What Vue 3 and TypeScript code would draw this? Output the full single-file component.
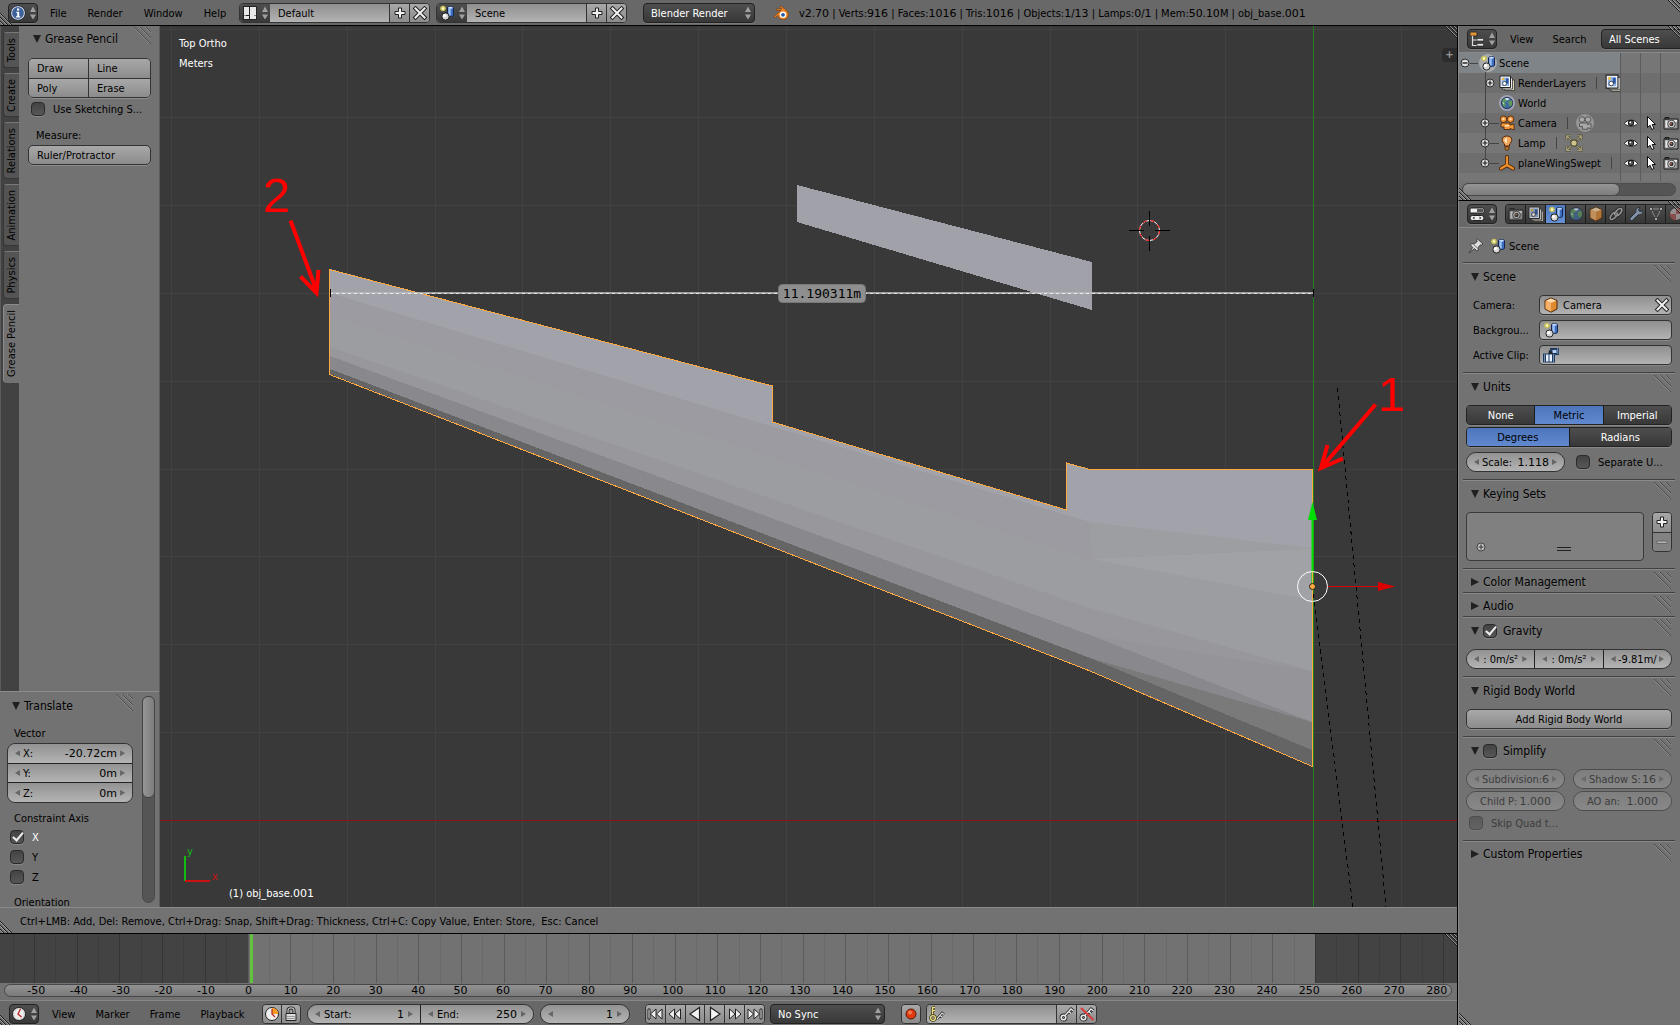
<script setup lang="ts">
import { ref } from 'vue'

interface Tab { label: string; size: number }
interface Row { name: string; icon: string; expand: boolean; data: string; toggles: boolean }

const menus: string[] = ['File', 'Render', 'Window', 'Help']
const stats = 'v2.70 | Verts:916 | Faces:1016 | Tris:1016 | Objects:1/13 | Lamps:0/1 | Mem:50.10M | obj_base.001'
const statParts: string[] = stats.split(/(\d+)/)
const tabs: Tab[] = [
  { label: 'Tools', size: 36 },
  { label: 'Create', size: 44 },
  { label: 'Relations', size: 57 },
  { label: 'Animation', size: 62 },
  { label: 'Physics', size: 48 },
  { label: 'Grease Pencil', size: 79 },
]
const vector = [
  { axis: 'X:', value: '-20.72cm' },
  { axis: 'Y:', value: '0m' },
  { axis: 'Z:', value: '0m' },
]
const axes = ref([
  { name: 'X', on: true },
  { name: 'Y', on: false },
  { name: 'Z', on: false },
])
const rows: Row[] = [
  { name: 'RenderLayers', icon: 'layers', expand: true, data: 'layers', toggles: false },
  { name: 'World', icon: 'worldhalo', expand: false, data: '', toggles: false },
  { name: 'Camera', icon: 'camera', expand: true, data: 'cameradata', toggles: true },
  { name: 'Lamp', icon: 'lamp', expand: true, data: 'lampdata', toggles: true },
  { name: 'planeWingSwept', icon: 'empty', expand: true, data: '', toggles: true },
]
const contexts: string[] = ['render', 'layers', 'scene', 'world', 'cube', 'link', 'wrench', 'mesh', 'material']
const gravity: string[] = [': 0m/s²', ': 0m/s²', '-9.81m/']
const transport: string[] = ['first', 'prev', 'back', 'play', 'next', 'last']

const gridX = Array.from({ length: 15 }, (_, i) => Math.round(171 + i * 87.85) + 0.5)
const gridY = Array.from({ length: 10 }, (_, i) => Math.round(29 + i * 87.9) + 0.5)

const frames = Array.from({ length: 34 }, (_, i) => -50 + i * 10)
const ticks = Array.from({ length: 69 }, (_, i) => -55 + i * 5)
const frameX = (f: number): number => Math.round(247.5 + f * 4.27) + 0.5
const gravityOn = ref(true)
</script>

<template>
  <svg class="defs" width="0" height="0" aria-hidden="true">
    <defs>
      <symbol id="i-ud" viewBox="0 0 8 16"><path d="M4 1.500L7 7H1zM4 14.500L7 9.500H1z" fill="#a0a0a0" /></symbol>
      <symbol id="i-info" viewBox="0 0 16 16">
        <circle cx="8" cy="8" r="6.500" fill="#3d6199" stroke="#d8dde6" stroke-width="1.200" /><circle cx="8" cy="8" r="7.400" fill="none" stroke="#1c2436" stroke-width=".7" />
        <path d="M6.200 6.700h3v4.600h1V12.400H6V11.300h1.200V7.800h-1zM7 3.600h2.200v2H7z" fill="#fff" />
      </symbol>
      <symbol id="i-screen" viewBox="0 0 16 16">
        <rect x="1" y="1" width="14" height="14" rx="1" fill="#222" />
        <path d="M2 2h5v8H2zM2 11h5v3H2zM8 2h6v8H8zM8 11h3v3H8zM12 11h2v3h-2z" fill="#e8e8e8" /><path d="M8 2h6v12H8z" fill="#e8e8e8" /><path d="M12 10.500h2M2 10.500h2" stroke="#888" />
      </symbol>
      <symbol id="i-plus" viewBox="0 0 16 16"><path d="M6.500 3h3v3.500H13v3H9.500V13h-3V9.500H3v-3h3.500z" fill="#f2f2f2" stroke="#222" /></symbol>
      <symbol id="i-minus" viewBox="0 0 16 16"><path d="M3 7h10v2.500H3z" fill="#b4b4b4" stroke="#5a5a5a" stroke-width=".8" /></symbol>
      <symbol id="i-x" viewBox="0 0 16 16"><path d="M3.500 3.500l9 9M12.500 3.500l-9 9" stroke="#222" stroke-width="4" stroke-linecap="square" /><path d="M3.500 3.500l9 9M12.500 3.500l-9 9" stroke="#f2f2f2" stroke-width="2" stroke-linecap="square" /></symbol>
      <symbol id="i-scene" viewBox="0 0 16 16">
        <circle cx="4" cy="3.500" r="2.800" fill="#c8c25a" /><circle cx="4" cy="3.500" r="1.200" fill="#ffffd0" />
        <path d="M8.500 3c0-2 6-2 6 0v7c0 2-6 2-6 0z" fill="#3c6cc0" stroke="#16264a" /><path d="M9.300 3.500h2.400v7H9.300z" fill="#9fc2f2" /><ellipse cx="11.500" cy="2.800" rx="2.400" ry="1" fill="#c6dcff" />
        <circle cx="6.500" cy="11.500" r="3.600" fill="#d6d6d6" stroke="#222" /><circle cx="5.500" cy="10.500" r="1.600" fill="#fff" />
      </symbol>
      <symbol id="i-blender" viewBox="0 0 16 16">
        <path d="M1 11.500L8 5.500H3.500V4H9L6.500 2 8 1l6 5c2.500 3 1.500 8-3.500 8.500C7 14.500 5 12.500 5 10.300L2.500 12.500z" fill="#f08020" stroke="#7a3c08" stroke-width=".6" />
        <circle cx="10" cy="9.800" r="3.300" fill="#fff" /><circle cx="10" cy="9.800" r="1.900" fill="#2a5a9c" />
      </symbol>
      <symbol id="i-outliner" viewBox="0 0 16 16">
        <path d="M1 1h7v4H1z" fill="#e0953a" stroke="#222" stroke-width=".8" /><path d="M3.500 5v9.500H8M3.500 9H8" fill="none" stroke="#ddd" stroke-width="1.200" /><path d="M8 7.500h6.500V10H8zM8 12.500h6.500V15H8z" fill="#e6e6e6" stroke="#222" stroke-width=".6" />
      </symbol>
      <symbol id="i-buttons" viewBox="0 0 16 16">
        <rect x="1" y="2" width="14" height="5" rx="1.500" fill="#eee" stroke="#222" /><path d="M8 3h6v3H8z" fill="#555" />
        <rect x="1" y="9.500" width="14" height="5" rx="2.500" fill="#eee" stroke="#222" /><path d="M5.500 10.500L3.500 12l2 1.500zM10.500 10.500l2 1.500-2 1.500z" fill="#333" />
      </symbol>
      <symbol id="i-render" viewBox="0 0 16 16">
        <path d="M1 4h14v10H1zM2 2.500h4V4H2z" fill="#9a9a9a" stroke="#1c1c1c" /><path d="M2.500 5.500h2v7h-2zM11 5h3v2h-3z" fill="#e8e8e8" />
        <circle cx="8.500" cy="9" r="3.700" fill="#f2f2f2" stroke="#222" stroke-width=".8" /><circle cx="8.500" cy="9" r="2.200" fill="#333" /><circle cx="8" cy="8.500" r=".9" fill="#c86a5a" />
      </symbol>
      <symbol id="i-layers" viewBox="0 0 16 16">
        <path d="M5.500 5h10v10.500h-10z" fill="#d8d2b8" stroke="#333" stroke-width=".8" /><path d="M3.500 3h10v11h-10z" fill="#eee" stroke="#333" stroke-width=".8" /><path d="M1 1h10.500v11.500H1z" fill="#fff" stroke="#222" />
        <path d="M2.500 2.500h7.500V11H2.500z" fill="#8fb4e8" /><path d="M7 3.500h2.500v5H7z" fill="#2c54a4" /><circle cx="5.500" cy="8.500" r="2" fill="#fff" stroke="#222" stroke-width=".7" /><circle cx="4" cy="4" r="1.300" fill="#f0c040" />
      </symbol>
      <symbol id="i-world" viewBox="0 0 16 16">
        <circle cx="8" cy="8" r="6.500" fill="#3f6ba0" stroke="#1d2f4a" /><path d="M3 4.500c2-2 4-2 5.500-1.500L7.500 6 5 7.500 6.500 10 5 12.500C3 11 1.700 8 3 4.500zM10 5.500l3.500-.5c1 2 .8 4.500-.7 6.500L10.500 11 9.500 8z" fill="#5f9a58" />
        <path d="M5.500 3c2-1 4-1 5.500.3L8 5zM3 7l2 1-1 1.500z" fill="#dfeaf5" />
      </symbol>
      <symbol id="i-worldhalo" viewBox="0 0 16 16"><circle cx="8" cy="8" r="8" fill="#a3a3b8" /><use href="#i-world" x="1" y="1" width="14" height="14" /></symbol>
      <symbol id="i-camera" viewBox="0 0 16 16">
        <g fill="#f0973c" stroke="#50290a" stroke-width=".9"><circle cx="4.500" cy="4.200" r="3.300" /><circle cx="11.500" cy="4.200" r="3.300" /><path d="M3 8h8v2l4-1v6l-4-1.500V14.500H5V12H2V9z" /></g><circle cx="4.500" cy="4.200" r="1.100" fill="#ffe2bf" /><circle cx="11.500" cy="4.200" r="1.100" fill="#ffe2bf" /><path d="M6 10h4v1.500H6z" fill="#ffe2bf" />
      </symbol>
      <symbol id="i-cameradata" viewBox="0 0 18 18">
        <circle cx="9" cy="9" r="9" fill="#969696" /><g fill="#a8a8a8" stroke="#505050" stroke-width=".9"><circle cx="6" cy="5.500" r="2.800" /><circle cx="12" cy="5.500" r="2.800" /><path d="M4.500 9h7v1.500l3.500-.8v5l-3.500-1v1.600H6.500V12.500h-3V10z" /></g>
      </symbol>
      <symbol id="i-lamp" viewBox="0 0 16 16">
        <path d="M8 1C1.800 1 2.500 7 5.500 9v2h5V9C13.500 7 14.200 1 8 1z" fill="#f3a65a" stroke="#50290a" /><path d="M8 3c-3 0-3 3-1.500 4.500L8 8z" fill="#ffe6c8" /><path d="M6 11.500h4V14l-1 1.300H7L6 14z" fill="#b0702c" stroke="#50290a" stroke-width=".8" />
      </symbol>
      <symbol id="i-lampdata" viewBox="0 0 16 16">
        <path d="M1.500 5V1.500H5M11 1.500h3.500V5M14.500 11v3.500H11M5 14.500H1.500V11M2 2l3.500 3.500M14 2l-3.500 3.500M14 14l-3.500-3.500M2 14l3.500-3.500" fill="none" stroke="#4c4936" stroke-width="2" /><path d="M1.500 5V1.500H5M11 1.500h3.500V5M14.500 11v3.500H11M5 14.500H1.500V11M2 2l3.500 3.500M14 2l-3.500 3.500M14 14l-3.500-3.500M2 14l3.500-3.500" fill="none" stroke="#a8a078" /><circle cx="8" cy="8" r="2.800" fill="#cfc488" stroke="#4f4b38" />
      </symbol>
      <symbol id="i-empty" viewBox="0 0 16 16"><path d="M8 2v8M8 10l-6 3.500M8 10l6 3.500" stroke="#50290a" stroke-width="4" stroke-linecap="round" /><path d="M8 2v8M8 10l-6 3.500M8 10l6 3.500" stroke="#f0902c" stroke-width="2.200" stroke-linecap="round" /></symbol>
      <symbol id="i-eye" viewBox="0 0 16 16"><path d="M1.500 8.500C4 4 12 4 14.500 8.500 12 12 4 12 1.500 8.500z" fill="#fff" stroke="#222" /><circle cx="8" cy="8" r="2.700" fill="#555" stroke="#111" /><circle cx="7.300" cy="7.300" r=".9" fill="#fff" /></symbol>
      <symbol id="i-cursor" viewBox="0 0 16 16"><path d="M4.500 1.500v11l2.600-2.200 1.700 4.200 2.200-1-1.800-4h3.300z" fill="#fff" stroke="#111" /></symbol>
      <symbol id="i-cube" viewBox="0 0 16 16"><path d="M8 1l6 2.500v8.500L8 15.200 2 12V3.500z" fill="#e08a30" stroke="#4a2708" /><path d="M8 6v8.500L2.600 11.700V4.200z" fill="#f6b168" /><path d="M8 1.600l5.200 2.200L8 5.800 2.800 3.800z" fill="#ffdcae" /></symbol>
      <symbol id="i-link" viewBox="0 0 16 16"><g fill="none" stroke-linecap="round"><path d="M7 9c-1.500-1.500 3-6.500 5-6.500s3.500 2.500-2 7M9 7c1.500 1.500-3 6.500-5 6.500s-3.500-2.500 2-7" stroke="#222" stroke-width="3.400" /><path d="M7 9c-1.500-1.500 3-6.500 5-6.500s3.500 2.500-2 7M9 7c1.500 1.500-3 6.500-5 6.500s-3.500-2.500 2-7" stroke="#b8b8b8" stroke-width="1.600" /></g></symbol>
      <symbol id="i-wrench" viewBox="0 0 16 16"><path d="M2 12l6-6c-.8-2.500 1-5 4-4.500L10.500 4l1.500 1.800 2.600-1.300c.6 3-1.800 4.800-4 4L4.300 14.500C3 15.500 1 13.500 2 12z" fill="#9bb3d4" stroke="#20262f" /></symbol>
      <symbol id="i-mesh" viewBox="0 0 16 16"><path d="M3 3h10L8 13z" fill="none" stroke="#aaa" /><path d="M1.500 1.500h3v3h-3zM11.500 1.500h3v3h-3zM6.500 11.500h3v3h-3z" fill="#d8d8d8" stroke="#222" stroke-width=".8" /></symbol>
      <symbol id="i-material" viewBox="0 0 16 16"><circle cx="8" cy="8" r="6.500" fill="#b8b0b0" stroke="#222" /><path d="M8 1.500A6.500 6.500 0 0 1 14.500 8H8zM8 8v6.500A6.500 6.500 0 0 1 1.500 8z" fill="#a85450" /></symbol>
      <symbol id="i-pin" viewBox="0 0 16 16"><path d="M9.500 1l5.500 5-1.500 1-1-.3-2.500 3 .3 2.500-1.500.8-2.300-2.400L1 15l3.700-5.500L2.500 7l1-1.300 2.800.3 2.900-2.500L8.500 2z" fill="#ddd" stroke="#333" stroke-width=".9" /><path d="M6 7l3.500 3" stroke="#777" /></symbol>
      <symbol id="i-clip" viewBox="0 0 16 16"><path d="M7 1h9v7H7z" fill="#1f3b63" /><path d="M9.500 3h4v3h-4z" fill="#b8d0ee" /><path d="M6 3l5 4-6 2z" fill="#222" /><path d="M0 6.500h12V15.500H0z" fill="#1f3b63" /><path d="M3 7.500h2.500V14.500H3zM6.500 7.500H9V14.500H6.500z" fill="#eaf2ff" /><path d="M1.500 7.500v8M10.500 7.500v8M14.700 1.500v6" stroke="#cfe0f5" stroke-dasharray="1 1" /></symbol>
      <symbol id="i-clock" viewBox="0 0 16 16"><circle cx="8" cy="8" r="6.500" fill="#eee" stroke="#222" /><circle cx="8" cy="8" r="5.200" fill="none" stroke="#aaa" stroke-dasharray="1 1.700" /><path d="M9.500 3L7 8l3.500 3" fill="none" stroke="#b82020" stroke-width="1.300" /></symbol>
      <symbol id="i-autoclock" viewBox="0 0 16 16"><circle cx="8" cy="8" r="6.500" fill="#eee" stroke="#222" /><path d="M8 8V1.800A6.200 6.200 0 0 1 14.200 8z" fill="#f79a20" /><path d="M8 3v5l3 3" fill="none" stroke="#b82020" stroke-width="1.200" /></symbol>
      <symbol id="i-lock" viewBox="0 0 16 16"><path d="M5 8V4.500C5 1 11 1 11 4.500V8" fill="none" stroke="#222" stroke-width="3" /><path d="M5 8V4.500C5 1 11 1 11 4.500V8" fill="none" stroke="#bbb" stroke-width="1.300" /><path d="M3 7.500h10v7H3z" fill="#ddd" stroke="#222" /><path d="M4 10.500h8M4 12.500h8" stroke="#999" /></symbol>
      <symbol id="i-first" viewBox="0 0 16 16"><path d="M1 3h2v10H1zM9 3v10L3.500 8zM15 3v10L9.500 8z" fill="#eee" stroke="#222" /></symbol>
      <symbol id="i-prev" viewBox="0 0 16 16"><path d="M7.500 3v10L2 8zM13.500 3v10L8 8z" fill="#eee" stroke="#222" /></symbol>
      <symbol id="i-back" viewBox="0 0 16 16"><path d="M12.500 1.500v13L3 8z" fill="#f4f4f4" stroke="#222" stroke-width="1.200" /></symbol>
      <symbol id="i-play" viewBox="0 0 16 16"><path d="M3.500 1.500v13L13 8z" fill="#f4f4f4" stroke="#222" stroke-width="1.200" /></symbol>
      <symbol id="i-next" viewBox="0 0 16 16"><path d="M2.500 3v10L8 8zM8.500 3v10L14 8z" fill="#eee" stroke="#222" /></symbol>
      <symbol id="i-last" viewBox="0 0 16 16"><path d="M13 3h2v10h-2zM7 3v10l5.500-5zM1 3v10l5.500-5z" fill="#eee" stroke="#222" /></symbol>
      <symbol id="i-rec" viewBox="0 0 16 16"><circle cx="8" cy="8" r="5" fill="#e03a10" stroke="#5a1a0a" /><circle cx="7" cy="6.500" r="2" fill="#f47850" /></symbol>
      <symbol id="i-keyset" viewBox="0 0 16 16"><path d="M8 13l5-6 2 1.500M11 9.500l2 1.500" fill="none" stroke="#222" stroke-width="2.600" /><path d="M8 13l5-6 2 1.500M11 9.500l2 1.500" fill="none" stroke="#ddd" stroke-width="1.200" /><path d="M3.500 10V1M3.500 1.500H6M3.500 4.500H6" fill="none" stroke="#3a3510" stroke-width="2.800" /><path d="M3.500 10V1M3.500 1.500H6M3.500 4.500H6" fill="none" stroke="#e8dc88" stroke-width="1.400" /><circle cx="4" cy="12" r="2.400" fill="none" stroke="#3a3510" stroke-width="2.800" /><circle cx="4" cy="12" r="2.400" fill="none" stroke="#e8dc88" stroke-width="1.400" /></symbol>
      <symbol id="i-key" viewBox="0 0 16 16"><path d="M6 9.500L12 3l2.500 2M10 5.500l2 2" fill="none" stroke="#222" stroke-width="3" /><circle cx="4.500" cy="11.500" r="2.300" fill="none" stroke="#222" stroke-width="3.200" /><path d="M6 9.500L12 3l2.500 2M10 5.500l2 2" fill="none" stroke="#e8e8e8" stroke-width="1.400" /><circle cx="4.500" cy="11.500" r="2.300" fill="none" stroke="#e8e8e8" stroke-width="1.600" /></symbol>
      <symbol id="i-keydel" viewBox="0 0 16 16"><use href="#i-key" /><path d="M2 2l12.500 12" stroke="#d83838" stroke-width="2" /></symbol>
      <symbol id="i-grip" viewBox="0 0 17 17"><path d="M0 0l17 17M6 0l11 11M12 0l5 5" stroke="#4c4c4c" /><path d="M0 1l16 16M5 0l12 12M11 0l6 6" stroke="#949494" stroke-width=".7" /></symbol>
      <symbol id="i-cr" viewBox="0 0 12 12"><path d="M0 0l12 12M4 0l8 8M8 0l4 4" stroke="#1c1c1c" /><path d="M1 0l11 11M5 0l7 7M9 0l3 3" stroke="#a8a8a8" stroke-width=".8" /></symbol>
      <symbol id="i-cl" viewBox="0 0 12 12"><path d="M0 0l12 12M0 4l8 8M0 8l4 4" stroke="#1c1c1c" /><path d="M0 1l11 11M0 5l7 7M0 9l3 3" stroke="#a8a8a8" stroke-width=".8" /></symbol>
      <symbol id="i-exp" viewBox="0 0 10 10"><circle cx="5" cy="5" r="4" fill="#ddd" stroke="#2c2c2c" /><path d="M2.500 5h5M5 2.500v5" stroke="#222" stroke-width="1.200" /></symbol>
      <symbol id="i-col" viewBox="0 0 10 10"><circle cx="5" cy="5" r="4" fill="#ddd" stroke="#2c2c2c" /><path d="M2.500 5h5" stroke="#222" stroke-width="1.400" /></symbol>
      <symbol id="i-down" viewBox="0 0 10 10"><path d="M1 1h8L5 9z" fill="#202020" /></symbol>
      <symbol id="i-right" viewBox="0 0 10 10"><path d="M1 1v8l8-4z" fill="#202020" /></symbol>
    </defs>
  </svg>

  <div class="app">
    <header class="bar top">
      <svg class="corner bl"><use href="#i-cl" /></svg>
      <button class="dark editor" aria-label="Editor type"><svg class="ic"><use href="#i-info" /></svg><svg class="ud"><use href="#i-ud" /></svg></button>
      <nav class="menus main-menus"><button v-for="m in menus" :key="m" class="menu">{{ m }}</button></nav>
      <div class="idblock">
        <button class="browse" aria-label="Browse screens"><svg class="ic"><use href="#i-screen" /></svg><svg class="ud"><use href="#i-ud" /></svg></button>
        <input class="idname" value="Default" aria-label="Screen" />
        <button class="sq" aria-label="Add screen"><svg class="ic"><use href="#i-plus" /></svg></button>
        <button class="sq" aria-label="Delete screen"><svg class="ic"><use href="#i-x" /></svg></button>
      </div>
      <div class="idblock">
        <button class="browse" aria-label="Browse scenes"><svg class="ic"><use href="#i-scene" /></svg><svg class="ud"><use href="#i-ud" /></svg></button>
        <input class="idname" value="Scene" aria-label="Scene" />
        <button class="sq" aria-label="Add scene"><svg class="ic"><use href="#i-plus" /></svg></button>
        <button class="sq" aria-label="Delete scene"><svg class="ic"><use href="#i-x" /></svg></button>
      </div>
      <span class="sel engine"><select aria-label="Render engine"><option>Blender Render</option></select><svg class="ud"><use href="#i-ud" /></svg></span>
      <svg class="ic logo"><use href="#i-blender" /></svg>
      <span class="stats"><span v-for="(s, i) in statParts" :key="i" :class="{ digits: i % 2 }">{{ s }}</span></span>
      <svg class="corner tr"><use href="#i-cr" /></svg>
    </header>

    <div class="body">
      <main class="left">
        <section class="view">
          <aside class="shelf">
            <div class="upper">
              <div class="tabs" role="tablist">
                <button v-for="t in tabs" :key="t.label" role="tab" class="tab" :class="{ on: t.label === 'Grease Pencil' }" :style="{ height: t.size + 'px' }"><span>{{ t.label }}</span></button>
              </div>
              <div class="tools">
                <h2 class="title"><svg class="tri"><use href="#i-down" /></svg>Grease Pencil<svg class="grip"><use href="#i-grip" /></svg></h2>
                <div class="quad">
                  <button>Draw</button><button>Line</button><button>Poly</button><button>Erase</button>
                </div>
                <label class="check"><input type="checkbox" /><span>Use Sketching S...</span></label>
                <p class="cap">Measure:</p>
                <button class="tool lefty">Ruler/Protractor</button>
              </div>
            </div>
            <div class="operator">
              <div class="opbody">
                <h2 class="title"><svg class="tri"><use href="#i-down" /></svg>Translate<svg class="grip"><use href="#i-grip" /></svg></h2>
                <p class="cap vec">Vector</p>
                <div class="stack">
                  <label v-for="v in vector" :key="v.axis" class="num"><i class="al" /><span>{{ v.axis }}</span><input :value="v.value" /><i class="ar" /></label>
                </div>
                <p class="cap con">Constraint Axis</p>
                <label v-for="a in axes" :key="a.name" class="check ax" :class="{ lit: a.on }"><input v-model="a.on" type="checkbox" /><span>{{ a.name }}</span></label>
                <p class="cap ori">Orientation</p>
              </div>
              <div class="vscroll"><div class="vthumb" /></div>
            </div>
          </aside>

          <div class="canvas">
            <svg class="scene" viewBox="159 26 1298 881" preserveAspectRatio="xMaxYMid slice">
              <g stroke="#424242" shape-rendering="crispEdges">
                <line v-for="x in gridX" :key="'x' + x" :x1="x" :x2="x" y1="0" y2="1025" />
                <line v-for="y in gridY" :key="'y' + y" x1="100" x2="1680" :y1="y" :y2="y" />
              </g>
              <g shape-rendering="crispEdges">
                <rect x="100" y="820" width="1400" height="1" fill="#8f1212" />
                <rect x="1313" y="0" width="1" height="1000" fill="#1f7f1f" />
                <path d="M797 185L1092 262V310L797 222z" fill="#a1a1a9" />
                <path d="M330 269L772 386V422L1066 510V463L1090 469H1312V766L1090 671 330 374z" fill="#a2a2ab" />
                <path d="M330 293L1090 522L1312 548V766L1090 671 330 374z" fill="#9b9ba1" />
                <path d="M330 316L1090 560L1312 548V766L1090 671 330 374z" fill="#9c9da1" />
                <path d="M1090 522L1312 548L1092 559z" fill="#9d9ea2" />
                <path d="M1092 559L1312 549V600z" fill="#a1a2a6" />
                <path d="M330 347L1090 608L1312 671V766L1090 671 330 374z" fill="#98979c" />
                <path d="M330 356L1090 635L1312 671V766L1090 671 330 374z" fill="#89888c" />
                <path d="M1090 635L1312 671V722z" fill="#959499" />
                <path d="M330 369L1090 658L1312 722V766L1090 671 330 374z" fill="#656565" />
                <path d="M1090 658L1312 722V750z" fill="#7a7a7a" />
                <path d="M329.500 374.500V269.500L772.500 386V422L1066.500 510V463L1090 469.500H1312.500V766.500L1090 671z" fill="none" stroke="#ffa940" />
                <path d="M1312.500 586L1353 907M1337.500 388L1386 907" stroke="#000" stroke-dasharray="4 4" fill="none" />
              </g>
              <g>
                <path d="M330 293H1313" stroke="#bdbdbd" stroke-opacity=".8" stroke-width="2" />
                <path d="M330 293.500H1313" stroke="#fff" stroke-opacity=".7" stroke-dasharray="3 3" />
                <path d="M330.500 289v8M1313.500 289v8" stroke="#000" />
                <rect x="778.500" y="284.500" width="87" height="18" rx="4" fill="#8e8e8e" stroke="#787878" />
                <text x="822" y="298" class="mono" text-anchor="middle">11.190311m</text>
              </g>
              <g fill="none">
                <circle cx="1149.500" cy="230.500" r="10" stroke="#fff" /><circle cx="1149.500" cy="230.500" r="10" stroke="#f00" stroke-dasharray="4 4" />
                <path d="M1129 230.500h15M1155 230.500h15M1149.500 211v15M1149.500 236v15" stroke="#000" />
              </g>
              <path d="M1312.500 586V520" stroke="#0d0" stroke-width="2" /><path d="M1312.500 502l4.500 18h-9z" fill="#0d0" />
              <path d="M1327 586.500h52" stroke="#d00" /><path d="M1395 586.500l-17 4.500v-9z" fill="#d00" />
              <path d="M1312.500 571v30" stroke="#ffa940" />
              <circle cx="1312.500" cy="586.500" r="15" fill="none" stroke="#fff" /><circle cx="1312.500" cy="586.500" r="3" fill="#ffa940" stroke="#222" />
              <g stroke="#f00" stroke-width="4" fill="none">
                <path d="M290.500 220.500L317 292M300.500 276.500L316.500 293L318.500 270" />
                <path d="M1375.500 404.500L1322 467M1327.500 445L1321 468L1343 458.500" />
              </g>
              <g class="mark"><text x="263" y="212">2</text><text x="1378" y="411">1</text></g>
              <path d="M185 856v25" stroke="#1b1" stroke-width="2" /><path d="M185 881h25" stroke="#c11" stroke-width="2" />
              <text x="187" y="855" fill="#1b1">y</text><text x="212" y="880" fill="#c11">x</text>
              <g fill="#fff"><text x="179" y="47">Top Ortho</text><text x="179" y="67">Meters</text><text x="229" y="897">(1) obj_base.<tspan class="digits">001</tspan></text></g>
            </svg>
            <svg class="corner tr"><use href="#i-cr" /></svg>
            <button class="expand" aria-label="Show properties">+</button>
          </div>
        </section>

        <footer class="status"><svg class="corner bl"><use href="#i-cl" /></svg>Ctrl+LMB: Add, Del: Remove, Ctrl+Drag: Snap, Shift+Drag: Thickness, Ctrl+C: Copy Value, Enter: Store,&nbsp; Esc: Cancel</footer>

        <section class="timeline">
          <svg class="track" viewBox="0 0 1457 49" preserveAspectRatio="none">
            <rect width="1457" height="49" fill="#727272" />
            <path d="M0 0H248V49H0zM1315 0H1457V49H1315z" fill="#434343" />
            <line v-for="f in ticks" :key="f" :x1="frameX(f)" :x2="frameX(f)" y1="0" y2="49" stroke="#000" :stroke-opacity="f % 10 ? 0.08 : 0.2" />
            <rect x="250" width="3" height="49" fill="#62c23c" />
          </svg>
          <svg class="corner tr"><use href="#i-cr" /></svg>
          <div class="ruler"><div class="pill" /><div class="nums"><span v-for="f in frames" :key="f">{{ f }}</span></div></div>
          <div class="bar play">
            <svg class="corner bl"><use href="#i-cl" /></svg>
            <button class="dark editor" aria-label="Editor type"><svg class="ic"><use href="#i-clock" /></svg><svg class="ud"><use href="#i-ud" /></svg></button>
            <nav class="menus"><button v-for="m in ['View', 'Marker', 'Frame', 'Playback']" :key="m" class="menu">{{ m }}</button></nav>
            <div class="group clocks"><button aria-label="Use preview range"><svg class="ic"><use href="#i-autoclock" /></svg></button><button aria-label="Lock time"><svg class="ic"><use href="#i-lock" /></svg></button></div>
            <div class="numrow">
              <label class="num start"><i class="al" /><span>Start:</span><input value="1" /><i class="ar" /></label>
              <label class="num end"><i class="al" /><span>End:</span><input value="250" /><i class="ar" /></label>
            </div>
            <div class="numrow current"><label class="num"><i class="al" /><input value="1" aria-label="Current frame" /><i class="ar" /></label></div>
            <div class="group transport"><button v-for="t in transport" :key="t" :aria-label="t"><svg class="ic"><use :href="'#i-' + t" /></svg></button></div>
            <span class="sel sync"><select aria-label="Sync mode"><option>No Sync</option></select><svg class="ud"><use href="#i-ud" /></svg></span>
            <div class="group rec"><button aria-label="Record"><svg class="ic"><use href="#i-rec" /></svg></button></div>
            <div class="group keys">
              <label class="keyfield"><svg class="ic"><use href="#i-keyset" /></svg><input aria-label="Keying set" /></label>
              <button aria-label="Insert keyframe"><svg class="ic"><use href="#i-key" /></svg></button><button aria-label="Delete keyframe"><svg class="ic"><use href="#i-keydel" /></svg></button>
            </div>
          </div>
        </section>
      </main>

      <aside class="right">
        <section class="outliner">
          <div class="bar">
            <button class="dark editor" aria-label="Editor type"><svg class="ic"><use href="#i-outliner" /></svg><svg class="ud"><use href="#i-ud" /></svg></button>
            <nav class="menus"><button class="menu">View</button><button class="menu">Search</button></nav>
            <span class="sel scenes"><select aria-label="Display mode"><option>All Scenes</option></select></span>
            <svg class="corner tr"><use href="#i-cr" /></svg>
          </div>
          <div class="tree">
            <div class="row root"><div class="cell"><svg class="ex"><use href="#i-col" /></svg><i class="dash" /><span class="halo"><svg class="ic"><use href="#i-scene" /></svg></span><span class="nm">Scene</span></div><i class="tg" /><i class="tg" /><i class="tg" /></div>
            <div v-for="r in rows" :key="r.name" class="row" :class="{ deep: r.toggles }">
              <div class="cell">
                <svg v-if="r.expand" class="ex"><use href="#i-exp" /></svg><i v-else class="ex" />
                <i class="dash" />
                <svg class="ic"><use :href="'#i-' + r.icon" /></svg><span class="nm">{{ r.name }}</span>
                <i v-if="r.name !== 'World'" class="sep" />
                <svg v-if="r.data" class="ic dt"><use :href="'#i-' + r.data" /></svg>
              </div>
              <button v-for="k in ['eye', 'cursor', 'render']" :key="k" class="tg" :aria-label="r.name + ' ' + k"><svg v-if="r.toggles" class="ic"><use :href="'#i-' + k" /></svg></button>
            </div>
            <div class="row tail"><div class="cell" /><i class="tg" /><i class="tg" /><i class="tg" /></div>
            <div class="hscroll"><div class="hthumb" /></div>
            <svg class="corner bl"><use href="#i-cl" /></svg>
          </div>
        </section>

        <section class="props">
          <div class="bar">
            <button class="dark editor" aria-label="Editor type"><svg class="ic"><use href="#i-buttons" /></svg><svg class="ud"><use href="#i-ud" /></svg></button>
            <div class="ctx"><button v-for="c in contexts" :key="c" :class="{ on: c === 'scene' }" :aria-label="c"><svg class="ic"><use :href="'#i-' + c" /></svg></button></div>
            <svg class="corner tr"><use href="#i-cr" /></svg>
          </div>
          <div class="crumb"><svg class="ic"><use href="#i-pin" /></svg><svg class="ic"><use href="#i-scene" /></svg><span>Scene</span></div>

          <section class="panel">
            <h2 class="title"><svg class="tri"><use href="#i-down" /></svg>Scene<svg class="grip"><use href="#i-grip" /></svg></h2>
            <div class="content props-rows">
              <label class="prop"><span>Camera:</span><span class="field"><svg class="ic"><use href="#i-cube" /></svg><input value="Camera" /><svg class="ic"><use href="#i-x" /></svg></span></label>
              <label class="prop"><span>Backgrou...</span><span class="field"><svg class="ic"><use href="#i-scene" /></svg><input /></span></label>
              <label class="prop"><span>Active Clip:</span><span class="field"><svg class="ic"><use href="#i-clip" /></svg><input /></span></label>
            </div>
          </section>
          <section class="panel">
            <h2 class="title"><svg class="tri"><use href="#i-down" /></svg>Units<svg class="grip"><use href="#i-grip" /></svg></h2>
            <div class="content">
              <div class="radios"><button>None</button><button class="on">Metric</button><button>Imperial</button></div>
              <div class="radios second"><button class="on">Degrees</button><button>Radians</button></div>
              <div class="two scale"><div class="numrow"><label class="num"><i class="al" /><span>Scale:</span><input value="1.118" /><i class="ar" /></label></div><label class="check"><input type="checkbox" /><span>Separate U...</span></label></div>
            </div>
          </section>
          <section class="panel">
            <h2 class="title"><svg class="tri"><use href="#i-down" /></svg>Keying Sets<svg class="grip"><use href="#i-grip" /></svg></h2>
            <div class="content keying"><div class="list"><svg class="ex"><use href="#i-exp" /></svg><i class="handle" /></div><div class="addrem"><button aria-label="Add keying set"><svg class="ic"><use href="#i-plus" /></svg></button><button aria-label="Remove keying set"><svg class="ic"><use href="#i-minus" /></svg></button></div></div>
          </section>
          <section class="panel shut"><h2 class="title"><svg class="tri"><use href="#i-right" /></svg>Color Management<svg class="grip"><use href="#i-grip" /></svg></h2></section>
          <section class="panel shut"><h2 class="title"><svg class="tri"><use href="#i-right" /></svg>Audio<svg class="grip"><use href="#i-grip" /></svg></h2></section>
          <section class="panel">
            <h2 class="title"><svg class="tri"><use href="#i-down" /></svg><label class="check"><input v-model="gravityOn" type="checkbox" />Gravity</label><svg class="grip"><use href="#i-grip" /></svg></h2>
            <div class="content"><div class="numrow grav"><label v-for="(g, i) in gravity" :key="i" class="num"><i class="al" /><input :value="g" :aria-label="'Gravity ' + 'XYZ'[i]" /><i class="ar" /></label></div></div>
          </section>
          <section class="panel">
            <h2 class="title"><svg class="tri"><use href="#i-down" /></svg>Rigid Body World<svg class="grip"><use href="#i-grip" /></svg></h2>
            <div class="content"><button class="tool">Add Rigid Body World</button></div>
          </section>
          <section class="panel">
            <h2 class="title"><svg class="tri"><use href="#i-down" /></svg><label class="check"><input type="checkbox" />Simplify</label><svg class="grip"><use href="#i-grip" /></svg></h2>
            <div class="content off">
              <div class="two"><div class="numrow"><label class="num"><i class="al" /><span>Subdivision:</span><input value="6" disabled /><i class="ar" /></label></div><div class="numrow"><label class="num"><i class="al" /><span>Shadow S:</span><input value="16" disabled /><i class="ar" /></label></div></div>
              <div class="two second"><div class="numrow"><label class="num bare"><span>Child P:</span><input value="1.000" disabled /></label></div><div class="numrow"><label class="num bare"><span>AO an:</span><input value="1.000" disabled /></label></div></div>
              <label class="check skip"><input type="checkbox" disabled /><span>Skip Quad t...</span></label>
            </div>
          </section>
          <section class="panel shut"><h2 class="title"><svg class="tri"><use href="#i-right" /></svg>Custom Properties<svg class="grip"><use href="#i-grip" /></svg></h2></section>
          <svg class="corner bl"><use href="#i-cl" /></svg>
        </section>
      </aside>
    </div>
  </div>
</template>

<style>
html, body { height: 100%; background: #727272; }
body { overflow: hidden; }
</style>

<style scoped>
.defs { position: absolute; }
.app { --ui: "DejaVu Sans Condensed", "DejaVu Sans", sans-serif; display: flex; flex-direction: column; height: 100vh; overflow: hidden; font: 11px/14px var(--ui); color: #000; background: #727272; }
* { box-sizing: border-box; }
button, input, select { font: inherit; color: inherit; margin: 0; padding: 0; border: 0; background: none; border-radius: 0; min-width: 0; outline: 0; }
p, h2 { margin: 0; font-weight: normal; }
svg { display: block; flex: none; }
i { display: block; flex: none; }
.ic { width: 16px; height: 16px; }
.ud { width: 8px; height: 16px; }
.digits { font-family: "DejaVu Sans", sans-serif; }
.corner { position: absolute; width: 12px; height: 12px; z-index: 2; }
.corner.tr { top: 0; right: 0; }
.corner.bl { left: 0; bottom: 0; }

.bar { position: relative; display: flex; align-items: center; height: 26px; padding: 0 9px; background: #686868; flex: none; white-space: nowrap; }
.top { height: 26px; padding: 1px 9px 0 8px; border-bottom: 1px solid #000; }
.stats { padding-top: 2px; }
.menus { display: flex; flex: none; }
.menu { padding: 2px 6px 0; height: 20px; }
.editor { width: 30px; height: 20px; display: flex; align-items: center; justify-content: center; gap: 3px; flex: none; }
.dark, .sel { border: 1px solid #222; border-radius: 4px; background: linear-gradient(#4e4e4e, #383838); box-shadow: 0 1px rgba(255, 255, 255, .12); }
.main-menus { gap: 9px; margin-left: 6px; width: 195px; }
.idblock { display: flex; width: 191px; height: 20px; border: 1px solid #333; border-radius: 4px; overflow: hidden; background: linear-gradient(#8f8f8f, #b3b3b3); margin-right: 6px; flex: none; }
.browse { width: 30px; display: flex; align-items: center; justify-content: center; gap: 3px; background: linear-gradient(#4e4e4e, #383838); }
.idname { flex: 1; padding: 2px 0 0 8px; }
.sq { width: 20px; border-left: 1px solid #333; background: linear-gradient(#a8a8a8, #8c8c8c); display: flex; align-items: center; justify-content: center; }
.sel { position: relative; height: 20px; color: #fff; flex: none; }
.sel select { appearance: none; width: 100%; height: 18px; padding: 2px 0 0 7px; }
.sel .ud { position: absolute; right: 2px; top: 1px; pointer-events: none; }
.engine { width: 112px; margin-left: 10px; }
.logo { margin: 0 10px 0 18px; }

.body { flex: 1; display: flex; min-height: 0; }
.left { flex: 1; display: flex; flex-direction: column; min-width: 0; border-right: 1px solid #000; box-sizing: content-box; }
.view { flex: 1; display: flex; min-height: 0; }
.shelf { width: 160px; flex: none; display: flex; flex-direction: column; background: #727272; border-right: 1px solid #5c5c5c; }
.upper { flex: 1; display: flex; min-height: 0; }
.tabs { width: 19px; background: #424242; padding: 6px 0 0 2px; display: flex; flex-direction: column; gap: 5px; border-left: 1px solid #5a5a5a; }
.tab { display: flex; align-items: center; justify-content: center; border: 1px solid #363636; border-top-color: #787878; border-right: 0; border-radius: 4px 0 0 4px; background: #545454; }
.tab span { writing-mode: vertical-rl; transform: rotate(180deg); }
.tab.on { background: #727272; border-color: #8c8c8c #727272 #727272 #8c8c8c; }
.tools { flex: 1; padding: 0 8px 0 9px; }
.title { display: flex; align-items: center; height: 24px; font-size: 12px; line-height: 16px; white-space: nowrap; text-shadow: 0 1px rgba(255, 255, 255, .1); }
.tri { width: 10px; height: 10px; margin-right: 3px; }
.grip { width: 17px; height: 17px; margin-left: auto; align-self: flex-start; }
.tools .title { padding-left: 4px; margin-bottom: 7px; padding-top: 1px; height: 25px; }
.quad { display: grid; grid-template-columns: 60px 1fr; height: 40px; border: 1px solid #333; border-radius: 5px; overflow: hidden; box-shadow: 0 1px rgba(255, 255, 255, .2); }
.quad button { text-align: left; padding: 2px 0 0 8px; background: linear-gradient(#a8a8a8, #8c8c8c); }
.quad button:nth-child(odd) { border-right: 1px solid #333; }
.quad button:nth-child(-n+2) { border-bottom: 1px solid #333; }
.check { display: flex; align-items: center; gap: 8px; white-space: nowrap; }
.check input { appearance: none; width: 14px; height: 14px; border: 1px solid #2a2a2a; border-radius: 4px; background: linear-gradient(#434343, #575757); position: relative; flex: none; box-shadow: 0 1px rgba(255, 255, 255, .15); }
.check input:checked::after { content: ""; position: absolute; left: 4px; top: -1px; width: 4px; height: 9px; border: solid #eee; border-width: 0 2px 2px 0; transform: rotate(40deg); }
.check span { padding-top: 2px; }
.tools .check { padding-left: 3px; margin-top: 4px; height: 14px; }
.tools .cap { margin: 13px 0 1px 8px; height: 14px; }
.tool { display: block; width: 100%; height: 20px; padding-top: 2px; border: 1px solid #333; border-radius: 5px; background: linear-gradient(#a8a8a8, #8c8c8c); box-shadow: 0 1px rgba(255, 255, 255, .2); }
.lefty { text-align: left; padding-left: 8px; margin-top: 2px; }

.operator { height: 216px; flex: none; display: flex; border-top: 1px solid #8c8c8c; padding: 2px 4px 0 7px; overflow: hidden; }
.opbody { width: 127px; margin-right: 9px; }
.opbody .title { padding-left: 4px; }
.cap.vec { margin: 9px 0 2px 7px; }
.stack { border: 1px solid #333; border-radius: 8px; overflow: hidden; height: 60px; display: flex; flex-direction: column; }
.stack .num { flex: 1; }
.stack .num + .num { border-top: 1px solid #222; }
.num { display: flex; align-items: center; background: linear-gradient(#929292, #b4b4b4); padding: 0 7px; min-width: 0; white-space: nowrap; }
.num span { margin-left: 3px; padding-top: 2px; }
.num input { flex: 1; width: 0; text-align: right; margin-right: 3px; padding-top: 2px; font-family: "DejaVu Sans", sans-serif; }
.al, .ar { width: 5px; height: 6px; background: #666; }
.al { clip-path: polygon(100% 0, 100% 100%, 0 50%); }
.ar { clip-path: polygon(0 0, 100% 50%, 0 100%); }
.cap.con { margin: 9px 0 4px 7px; }
.ax { margin: 0 0 6px 3px; height: 14px; }
.ax.lit { color: #fff; }
.cap.ori { margin: 12px 0 0 7px; }
.vscroll { width: 13px; height: 207px; margin-top: 2px; border: 1px solid #484848; border-radius: 7px; background: #555; }
.vthumb { height: 102px; border-radius: 6px; background: linear-gradient(90deg, #959595, #7d7d7d); border: 1px solid #444; margin: -1px; }

.canvas { flex: 1; position: relative; background: #393939; overflow: hidden; min-width: 0; }
.scene { width: 100%; height: 100%; }
.scene text { font: 11px var(--ui); }
.scene .digits { font-family: "DejaVu Sans", sans-serif; }
.scene .mono { font: 13px "DejaVu Sans Mono", monospace; }
.scene .mark text { font: 49px "Liberation Sans", Arial, sans-serif; fill: #f00; }
.expand { position: absolute; right: 0; top: 22px; width: 15px; height: 14px; border-radius: 4px 0 0 4px; background: #2c2c2c; color: #999; line-height: 14px; font-weight: bold; }

.status { position: relative; height: 26px; padding: 7px 20px 0; background: #727272; border-top: 1px solid #8a8a8a; white-space: nowrap; overflow: hidden; flex: none; }
.timeline { position: relative; border-top: 1px solid #000; height: 92px; flex: none; overflow: hidden; }
.track { width: 100%; height: 49px; }
.ruler { position: relative; height: 18px; padding: 1px 5px 0 4px; background: #727272; border-bottom: 1px solid #888; }
.pill { height: 13px; border: 1px solid #484848; border-radius: 7px; background: linear-gradient(#929292, #7a7a7a); }
.nums { position: absolute; left: 15px; right: -1px; top: 1px; display: flex; line-height: 13px; font-family: "DejaVu Sans", sans-serif; }
.nums span { flex: 1 1 0; text-align: center; }
.play { height: 26px; padding: 0 9px; }
.play .menus { margin-left: 7px; gap: 8px; width: 216px; }
.group { display: flex; height: 20px; border: 1px solid #333; border-radius: 4px; overflow: hidden; flex: none; }
.group > button { width: 20px; display: flex; align-items: center; justify-content: center; background: linear-gradient(#a8a8a8, #8c8c8c); flex: none; }
.group > * + button { border-left: 1px solid #333; }
.clocks { width: 39px; }
.clocks > button, .transport > button, .rec > button { flex: 1 1 0; }
.numrow { display: flex; height: 20px; border: 1px solid #333; border-radius: 10px; overflow: hidden; flex: none; }
.numrow .num { flex: 1; }
.numrow .num + .num { border-left: 1px solid #222; }
.play .numrow { width: 227px; margin-left: 6px; }
.play .num span { margin-left: 4px; }
.play .num input { margin-right: 4px; }
.play .numrow.current { width: 90px; }
.transport { margin-left: 15px; width: 120px; }
.sync { width: 115px; margin-left: 5px; }
.rec { margin-left: 16px; width: 20px; }
.keys { margin-left: 5px; width: 171px; }
.keyfield { flex: 1; min-width: 0; display: flex; align-items: center; padding-left: 2px; background: linear-gradient(#8f8f8f, #b3b3b3); }
.keyfield input { flex: 1; width: 0; }

.right { width: 222px; flex: none; display: flex; flex-direction: column; overflow: hidden; }
.outliner { border-bottom: 1px solid #000; height: 175px; flex: none; display: flex; flex-direction: column; border-left: 1px solid #888; }
.right .bar { border-bottom: 1px solid #888; padding: 0 0 0 8px; overflow: hidden; height: 27px; }
.outliner .menus { margin-left: 7px; gap: 7px; width: 97px; }
.scenes { width: 100px; }
.tree { position: relative; flex: 1; }
.tree::before { content: ""; position: absolute; left: 26px; top: 19px; width: 1px; height: 91px; background: #444; }
.row { display: flex; height: 20px; align-items: center; }
.row:nth-child(even) { background: #6e6e6e; }
.row:nth-child(odd) { background: #767676; }
.cell { flex: 1; min-width: 0; display: flex; align-items: center; overflow: hidden; padding-left: 26px; height: 20px; white-space: nowrap; }
.nm { padding-top: 2px; }
.row.deep .cell { padding-left: 21px; }
.row.root .cell { padding-left: 1px; background: #7f8488; }
.ex { position: relative; width: 10px; height: 10px; }
.dash { width: 4px; height: 1px; margin-right: 1px; }
.row.deep .dash { background: #444; width: 9px; }
.row.root .dash { background: #444; width: 8px; }
.halo { position: relative; width: 18px; height: 18px; border-radius: 9px; background: #a8aaac; padding: 1px; margin-right: 2px; }
.row > .cell > .ic { width: 16px; margin-left: -1px; margin-right: 3px; }
.sep { width: 1px; height: 12px; background: #444; margin: 0 8px 0 10px; }
.row > .cell > .dt { margin: 0; width: 18px; height: 18px; }
.tg { width: 20px; height: 20px; border-left: 1px solid #5c5c5c; display: flex; align-items: center; justify-content: center; flex: none; }
.tail, .tail .cell, .tail .tg { height: 8px; }
.hscroll { margin: 2px 4px 0 3px; height: 13px; border-radius: 7px; background: #555; border: 1px solid #4c4c4c; }
.hthumb { width: 158px; height: 13px; margin: -1px; border: 1px solid #484848; border-radius: 7px; background: linear-gradient(#959595, #7d7d7d); }

.props { position: relative; flex: 1; min-height: 0; overflow: hidden; background: #727272; border-left: 1px solid #888; padding: 0; }
.ctx { display: flex; margin-left: 8px; height: 20px; border: 1px solid #222; border-right: 0; border-radius: 4px 0 0 4px; overflow: hidden; flex: none; }
.ctx button { width: 20px; display: flex; align-items: center; justify-content: center; background: linear-gradient(#4e4e4e, #383838); border-right: 1px solid #1c1c1c; }
.ctx .ic { opacity: .7; }
.ctx .on { background: linear-gradient(#5079bd, #6690d6); }
.ctx .on .ic { opacity: 1; }
.crumb { display: flex; align-items: center; height: 34px; padding: 2px 0 0 9px; gap: 6px; }
.crumb span { margin-left: -3px; padding-top: 1px; }
.panel { margin: 0 5px 0 4px; border-top: 1px solid #404040; }
.panel .title { border-top: 1px solid #8a8a8a; height: 25px; padding: 1px 4px 0 7px; }
.panel.shut .title { height: 23px; padding-top: 2px; }
.panel .title .check { font-size: 12px; gap: 6px; margin-left: 0; }
.content { padding: 7px 3px 7px; }
.panel .content .second { margin-top: 2px; }
.props-rows { display: flex; flex-direction: column; gap: 5px; }
.prop { display: grid; grid-template-columns: 66px minmax(0, 1fr); align-items: center; padding-left: 7px; white-space: nowrap; }
.prop > span:first-child { padding-top: 2px; }
.field { display: flex; align-items: center; height: 20px; border: 1px solid #333; border-radius: 4px; background: linear-gradient(#8f8f8f, #b3b3b3); padding: 0 1px 0 3px; box-shadow: 0 1px rgba(255, 255, 255, .15); }
.field input { flex: 1; width: 0; padding: 2px 0 0 4px; }
.radios { display: flex; height: 20px; border: 1px solid #222; border-radius: 4px; overflow: hidden; color: #fff; box-shadow: 0 1px rgba(255, 255, 255, .15); }
.radios button { flex: 1 1 0; padding-top: 2px; background: linear-gradient(#4e4e4e, #383838); }
.radios button + button { border-left: 1px solid #1c1c1c; }
.radios .on { background: linear-gradient(#4c75bb, #6089cf); color: #000; }
.two { display: grid; grid-template-columns: 1fr 1fr; gap: 8px; }
.two.scale { margin-top: 5px; }
.scale .check { padding-left: 3px; }
.keying { display: flex; gap: 8px; }
.list { flex: 1; position: relative; height: 49px; border: 1px solid #3a3a3a; border-radius: 4px; background: #808080; }
.list .ex { position: absolute; left: 9px; bottom: 8px; opacity: .7; }
.list .handle { position: absolute; left: 90px; bottom: 9px; width: 14px; height: 4px; border: solid #222; border-width: 1px 0; }
.addrem { width: 20px; height: 40px; border: 1px solid #333; border-radius: 4px; overflow: hidden; display: flex; flex-direction: column; }
.addrem button { flex: 1; display: flex; align-items: center; justify-content: center; background: linear-gradient(#a8a8a8, #8c8c8c); }
.addrem button + button { border-top: 1px solid #333; background: #828282; }
.grav .num input { text-align: center; margin: 0; font-family: var(--ui); }
.off { color: #3c3c3c; }
.off .numrow { border-color: #4c4c4c; }
.off .num { background: linear-gradient(#7e7e7e, #888); }
.off .al, .off .ar { background: #6a6a6a; }
.off .check input { opacity: .5; }
.bare { justify-content: center; padding: 0 10px; }
.skip { margin: 5px 0 3px 3px; height: 14px; }
</style>
